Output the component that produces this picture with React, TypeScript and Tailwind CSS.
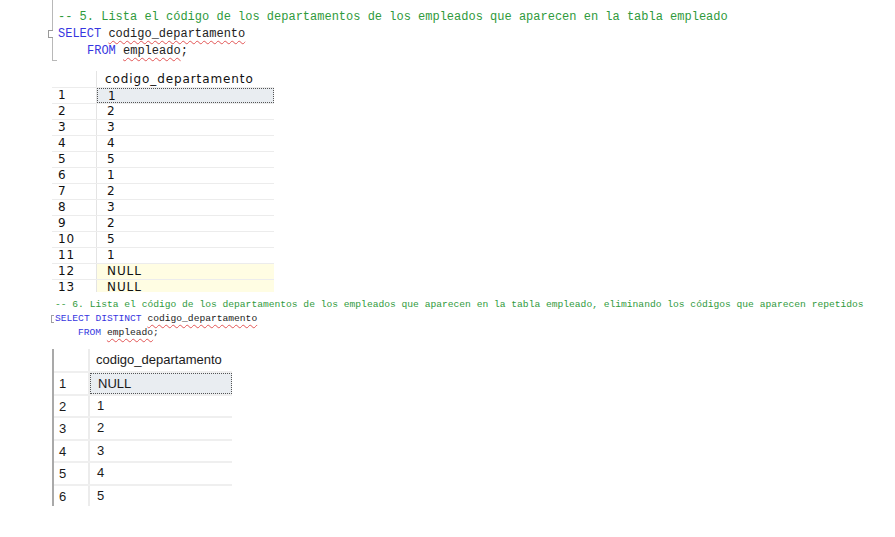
const rows1 = ['1', '2', '3', '4', '5', '1', '2', '3', '2', '5', '1', 'NULL', 'NULL'];
const rows2 = ['NULL', '1', '2', '3', '4', '5'];

function Squiggle({ children }: { children: React.ReactNode }) {
  return (
    <span className="underline decoration-wavy decoration-[#e25555] decoration-1 underline-offset-[3px]">
      {children}
    </span>
  );
}

function FirstQuery() {
  return (
    <div className="relative ml-[52px] pt-[9px] pb-[1px] border-l border-[#b8b8b8] pl-[5px] text-[12px] leading-[17px] font-['Liberation_Mono',monospace]">
      <div className="text-[#2f9a3c] whitespace-nowrap">
        -- 5. Lista el código de los departamentos de los empleados que aparecen en la tabla empleado
      </div>
      <div className="whitespace-nowrap text-[#222]">
        <span className="text-[#3636e0]">SELECT</span> <Squiggle>codigo_departamento</Squiggle>
      </div>
      <div className="whitespace-nowrap text-[#222] pl-[29px]">
        <span className="text-[#3636e0]">FROM</span> <Squiggle>empleado</Squiggle>;
      </div>
      <div className="absolute left-[-5px] top-[30px] w-[5px] h-[8px] border border-r-0 border-[#9a9a9a] bg-white" />
      <div className="absolute left-0 bottom-0 w-[4px] border-t border-[#b8b8b8]" />
    </div>
  );
}

function Grid1() {
  return (
    <div className="ml-[52px] mt-[10px] w-[222px] h-[221px] overflow-hidden font-['DejaVu_Sans',sans-serif] text-[12px] tracking-[0.9px] text-[#111]">
      <div className="flex h-[16px] items-center">
        <div className="w-[45px] h-full border-r border-[#e4e4e4]" />
        <div className="pl-[8px] leading-[16px]">codigo_departamento</div>
      </div>
      {rows1.map((v, i) => {
        const isNull = v === 'NULL';
        return (
          <div key={i} className="flex h-[16px] border-t border-[#ececec]">
            <div className="w-[45px] pl-[6px] leading-[15px] border-r border-[#e4e4e4]">{i + 1}</div>
            <div
              className={`flex-1 pl-[10px] leading-[14px] ${
                i === 0
                  ? 'bg-[#e9edf1] border border-dotted border-[#555]'
                  : isNull
                  ? 'bg-[#fffde3]'
                  : ''
              }`}
            >
              {v}
            </div>
          </div>
        );
      })}
    </div>
  );
}

function SecondQuery() {
  return (
    <div className="relative ml-[55px] mt-[6px] text-[9.65px] leading-[14px] font-['Liberation_Mono',monospace]">
      <div className="text-[#2f9a3c] whitespace-nowrap">
        -- 6. Lista el código de los departamentos de los empleados que aparecen en la tabla empleado, eliminando los códigos que aparecen repetidos
      </div>
      <div className="whitespace-nowrap text-[#222]">
        <span className="text-[#3636e0]">SELECT DISTINCT</span> <Squiggle>codigo_departamento</Squiggle>
      </div>
      <div className="whitespace-nowrap text-[#222] pl-[23px]">
        <span className="text-[#3636e0]">FROM</span> <Squiggle>empleado</Squiggle>;
      </div>
      <div className="absolute left-[-4px] top-[17px] w-[3px] h-[8px] border border-r-0 border-[#a0a0a0]" />
    </div>
  );
}

function Grid2() {
  return (
    <div className="ml-[52px] mt-[9px] w-[180px] border-l-2 border-[#a9a9a9] font-['Liberation_Sans',Arial,sans-serif] text-[13px] text-[#1a1a1a]">
      <div className="flex h-[22px] items-center">
        <div className="w-[36px] h-full border-r-2 border-[#ececec]" />
        <div className="pl-[6px] leading-[22px]">codigo_departamento</div>
      </div>
      {rows2.map((v, i) => (
        <div key={i} className="flex h-[22.5px] border-t-2 border-[#efefef]">
          <div className="w-[36px] pl-[5px] leading-[21px] border-r-2 border-[#ececec]">{i + 1}</div>
          <div
            className={`flex-1 pl-[7px] leading-[19px] ${
              i === 0 ? 'bg-[#e9edf1] border border-dotted border-[#555]' : ''
            }`}
          >
            {v}
          </div>
        </div>
      ))}
    </div>
  );
}

export default function App() {
  return (
    <div className="w-[895px] h-[537px] bg-white overflow-hidden">
      <FirstQuery />
      <Grid1 />
      <SecondQuery />
      <Grid2 />
    </div>
  );
}
